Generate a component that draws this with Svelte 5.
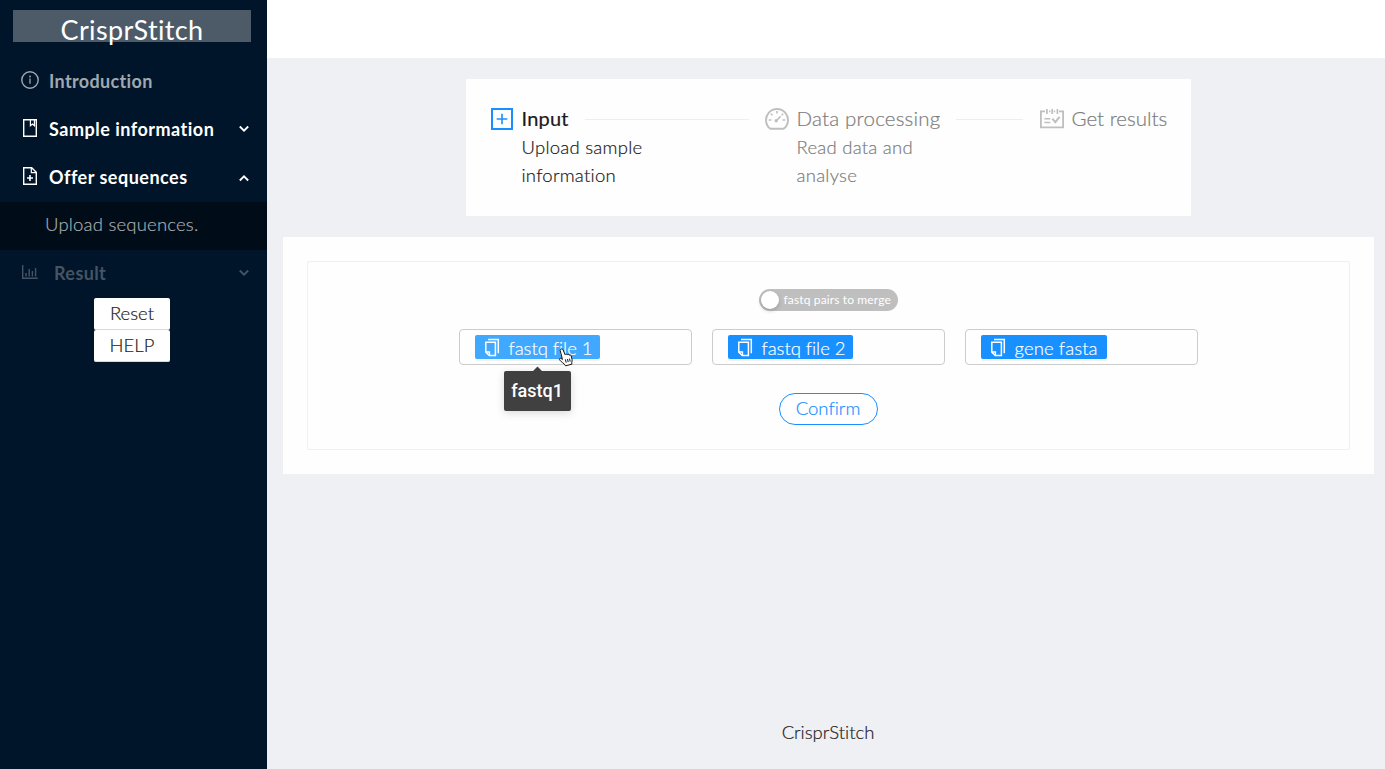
<script>
  const files = [
    { label: 'fastq file 1', hover: true, tip: 'fastq1' },
    { label: 'fastq file 2' },
    { label: 'gene fasta', wide: true }
  ];
</script>

<div class="layout">
  <aside>
    <div class="logo"><span>CrisprStitch</span></div>
    <nav>
      <div class="item muted">
        <svg class="ic" width="18" height="18" viewBox="0 0 18 18" fill="none" stroke="currentColor"><circle cx="9" cy="9" r="8.2" stroke-width="1.4" /><path d="M9 7.5v5.3" stroke-width="1.3" /><circle cx="9" cy="5.5" r=".9" fill="currentColor" stroke="none" /></svg>
        <b class="intro">Introduction</b>
      </div>
      <div class="item">
        <svg class="ic" width="18" height="18" viewBox="0 0 18 18" fill="none" stroke="currentColor" stroke-width="1.4"><path d="M2.7.7h12.6v16.6H2.7z" /><path d="M9.4.7v6l2-1.6 2 1.6v-6" stroke-width="1.2" /></svg>
        <b class="sample">Sample information</b>
        <svg class="arrow" width="10" height="8" viewBox="0 0 10 8" fill="none" stroke="currentColor" stroke-width="1.8"><path d="M.8 1.5 5 5.7l4.2-4.2" /></svg>
      </div>
      <div class="item">
        <svg class="ic" width="18" height="18" viewBox="0 0 18 18" fill="none" stroke="currentColor" stroke-width="1.4"><path d="M2.7.7h8l4.6 4.6v12H2.7z" /><path d="M10.3.7v5h5" stroke-width="1.2" /><path d="M9 8v6M6 11h6" stroke-width="1.6" /></svg>
        <b class="sample">Offer sequences</b>
        <svg class="arrow up" width="10" height="8" viewBox="0 0 10 8" fill="none" stroke="currentColor" stroke-width="1.8"><path d="M.8 6.5 5 2.3l4.2 4.2" /></svg>
      </div>
      <div class="sub">Upload sequences.</div>
      <div class="item disabled">
        <svg class="ic" width="18" height="18" viewBox="0 0 18 18" fill="none" stroke="currentColor" stroke-width="1.4"><path d="M1.7 2v13.3h15M5 10v3.5M8.2 6v7.5M11.4 8v5.5M14.6 5v8.5" /></svg>
        <b class="result">Result</b>
        <svg class="arrow" width="10" height="8" viewBox="0 0 10 8" fill="none" stroke="currentColor" stroke-width="1.8"><path d="M.8 1.5 5 5.7l4.2-4.2" /></svg>
      </div>
    </nav>
    <div class="buttons">
      <button>Reset</button>
      <button>HELP</button>
    </div>
  </aside>

  <div class="main">
    <header></header>
    <section class="steps">
      <div class="step active">
        <svg width="24" height="24" viewBox="0 0 24 24" fill="none" stroke="#1890ff"><path d="M2 2h20v20H2z" stroke-width="2" /><path d="M12 6.7v10.6M6.7 12h10.6" stroke-width="1.6" /></svg>
        <div class="words">
          <div class="title"><span>Input</span><i></i></div>
          <p>Upload sample<br />information</p>
        </div>
      </div>
      <div class="step second">
        <svg width="24" height="24" viewBox="0 0 24 24" fill="none" stroke="#bfbfbf"><path d="M5.4 21.8A11 11 0 1 1 18.6 21.8Z" stroke-width="1.9" /><path d="m11 14 4.6-4.6M12 4v2.5M5.9 6.7l1.6 1.6M16.7 8.2l1.4-1.5M3.7 13h2.8M17.5 13h2.8" stroke-width="1.6" /><circle cx="11.2" cy="13.8" r="1.7" fill="#bfbfbf" stroke="none" /></svg>
        <div class="words">
          <div class="title"><span>Data processing</span><i></i></div>
          <p>Read data and<br />analyse</p>
        </div>
      </div>
      <div class="step third">
        <svg width="24" height="24" viewBox="0 0 24 24" fill="none" stroke="#bfbfbf" stroke-width="1.8"><path d="M5 4.4H.9V20.3h22.2V4.4H19" /><path d="M9 4.4h1.4M13.8 4.4h1.4M6.9 2v5M12.2 2v5M17.4 2v5" stroke-width="1.7" /><path d="M4.4 11.8h5.9M4.4 15.5h5.9" stroke-width="1.6" /><path d="m12.3 11.6 3 3.6 4.3-5.4" stroke-width="2" /></svg>
        <div class="words">
          <div class="title"><span>Get results</span></div>
        </div>
      </div>
    </section>

    <section class="panel">
      <div class="frame">
        <div class="switch"><span class="knob"></span><span>fastq pairs to merge</span></div>
        <div class="files">
          {#each files as file}
            <div class="file">
              <div class="tag" class:hover={file.hover} class:wide={file.wide}>
                <svg width="18" height="20" viewBox="0 0 18 20" fill="none" stroke="#fff" stroke-width="1.5"><path d="M2.8 4.3h9.6v13.3H6.3l-3.5-3.5z" /><path d="M3 14h3.5v3.5" stroke-width="1.3" /><path d="M5 1.6h10.3v13.6" /></svg>
                <span>{file.label}</span>
                {#if file.tip}
                  <div class="tip">{file.tip}</div>
                  <svg class="cursor" width="16" height="19" viewBox="0 0 16 19"><path d="M3.1 1.1c.8-.5 1.6-.1 2 .8l2 4.8c.3-.7 1.6-.9 2.1.1.5-.7 1.7-.5 2 .4.7-.5 1.8-.1 2 .7l.9 3.7c.2 1-.3 2-.3 3v1.6l-6.3 1.6-1.1-1.7c-1.4-.7-2.5-2.2-4-3.3-.9-.8-1.4-1.7-.7-2.3.7-.5 1.7 0 2.7 1L2.3 2.9c-.3-.7 0-1.4.8-1.8Z" fill="#fff" stroke="#111" /><path d="m7.4 11.4.8 3.2m1.3-3.6.7 3.1m1.3-3.5.7 3" stroke="#111" /></svg>
                {/if}
              </div>
            </div>
          {/each}
        </div>
        <button class="confirm">Confirm</button>
      </div>
    </section>
    <footer>CrisprStitch</footer>
  </div>
</div>

<style>
  :global(body) { margin: 0; }
  * { box-sizing: border-box; }
  .layout { display: flex; width: 1385px; height: 769px; overflow: hidden; background: #eff0f4; font-family: Lato, "Open Sans", sans-serif; font-size: 18.5px; font-weight: 300; font-variant-ligatures: none; -webkit-text-stroke: .2px; color: #1a1a1a; }
  aside { width: 267px; background: #001529; color: #fff; flex: none; }
  .logo { width: 238px; height: 32px; margin: 10px 0 0 13px; background: #4d5b69; text-align: center; font-size: 27px; font-weight: 400; -webkit-text-stroke: 0; line-height: 40px; letter-spacing: .35px; white-space: nowrap; }
  nav { margin-top: 14px; }
  .item { height: 48px; display: flex; align-items: center; padding: 0 18px 2px 21px; -webkit-text-stroke: 0; }
  .item b { margin-left: 10px; font-size: 18px; font-weight: 700; line-height: 24px; padding-top: 3px; white-space: nowrap; }
  .item .intro { letter-spacing: .35px; }
  .item .sample { letter-spacing: .5px; }
  .item .result { margin-left: 15px; letter-spacing: .4px; }
  .ic { flex: none; position: relative; top: 1px; }
  .arrow { margin-left: auto; margin-top: 3px; }
  .arrow.up { margin-top: 5px; }
  .muted { color: #a0a8b0; }
  .disabled { color: #455464; }
  .sub { height: 48px; margin-top: 2px; background: #000c17; color: #a8acb0; padding-left: 45px; line-height: 45px; letter-spacing: .2px; }
  .sub + .item { margin-top: -2px; }
  .buttons { width: 76px; margin: 2px 0 0 94px; display: flex; flex-direction: column; }
  button { font: inherit; color: inherit; padding: 0; background: #fff; }
  .buttons button { height: 32px; border: 0; border-bottom: 1px solid #d9d9d9; border-radius: 2px; color: #1a1a1a; line-height: 28px; padding-bottom: 2px; }
  .main { width: 1118px; display: flex; flex-direction: column; align-items: center; padding-left: 4px; }
  header { width: 1118px; height: 58px; align-self: flex-start; margin-left: -4px; background: #fff; flex: none; }
  .steps { width: 725px; height: 137px; margin-top: 21px; padding: 28px 24px 0; background: #fefefe; display: flex; flex: none; color: #7c7c7c; }
  .step { display: flex; width: 259px; margin-right: 16px; flex: none; }
  .step.second { width: 258px; margin-right: 17px; }
  .step.third { width: 130px; margin-right: 0; }
  .step > svg { flex: none; }
  .words { flex: 1; margin-left: 8px; }
  .title { height: 24px; display: flex; align-items: center; font-size: 20.5px; line-height: 24px; white-space: nowrap; letter-spacing: .2px; }
  .title span { position: relative; top: -1px; }
  .third .title { letter-spacing: 0; }
  .title i { height: 1px; background: #eee; flex: 1; margin: 0 0 0 16px; }
  .active { color: #1a1a1a; }
  .active .title { font-weight: 400; font-size: 20px; letter-spacing: .2px; }
  p { margin: 2px 0 0; line-height: 28px; letter-spacing: .25px; }
  .panel { width: 1091px; height: 237px; margin: 21px 0 0; padding: 24px; background: #fefefe; flex: none; }
  .frame { height: 189px; border: 1px solid #f0f0f0; border-radius: 2px; display: flex; flex-direction: column; align-items: center; }
  .switch { width: 139px; height: 22px; margin-top: 27px; border-radius: 11px; background: #bfbfbf; color: #fff; display: flex; align-items: center; padding: 0 0 0 2px; font-size: 12px; font-weight: 400; line-height: 20px; letter-spacing: .14px; white-space: nowrap; -webkit-text-stroke: 0; }
  .knob { width: 18px; height: 18px; background: #fff; border-radius: 50%; margin-right: 5px; box-shadow: 0 2px 4px #00230b33; }
  .files { display: flex; gap: 20px; margin-top: 18px; }
  .file { width: 233px; height: 36px; border: 1px solid #ccc; border-radius: 4px; padding: 5px 15px; }
  .tag { position: relative; width: 125px; height: 24px; border-radius: 2px; background: #1890ff; color: #fff; display: flex; padding: 3px 0 0 8px; box-shadow: 0 2px 0 #0000000b; line-height: 21px; white-space: nowrap; }
  .tag.hover { background: #40a9ff; }
  .tag.wide { width: 126px; }
  .tag > svg { flex: none; }
  .tag span { margin-left: 8px; letter-spacing: -.05px; }
  .tag.wide span { letter-spacing: .1px; }
  .tip { position: absolute; left: 29px; top: 36px; width: 67px; height: 40px; border-radius: 2px; background: #404040; box-shadow: 0 2px 8px #00000026; font: 500 18px/39px Roboto, sans-serif; text-align: center; -webkit-text-stroke: 0; }
  .tip::before { content: ""; position: absolute; left: 30px; top: -3px; width: 7px; height: 7px; background: #404040; transform: rotate(45deg); }
  .cursor { position: absolute; left: 83px; top: 13px; }
  .confirm { width: 99px; height: 32px; margin-top: 28px; border: 1px solid #1890ff; border-radius: 16px; color: #1890ff; line-height: 26px; padding-bottom: 3px; letter-spacing: 0; }
  footer { margin-top: 246px; line-height: 24px; color: #222; }
</style>
